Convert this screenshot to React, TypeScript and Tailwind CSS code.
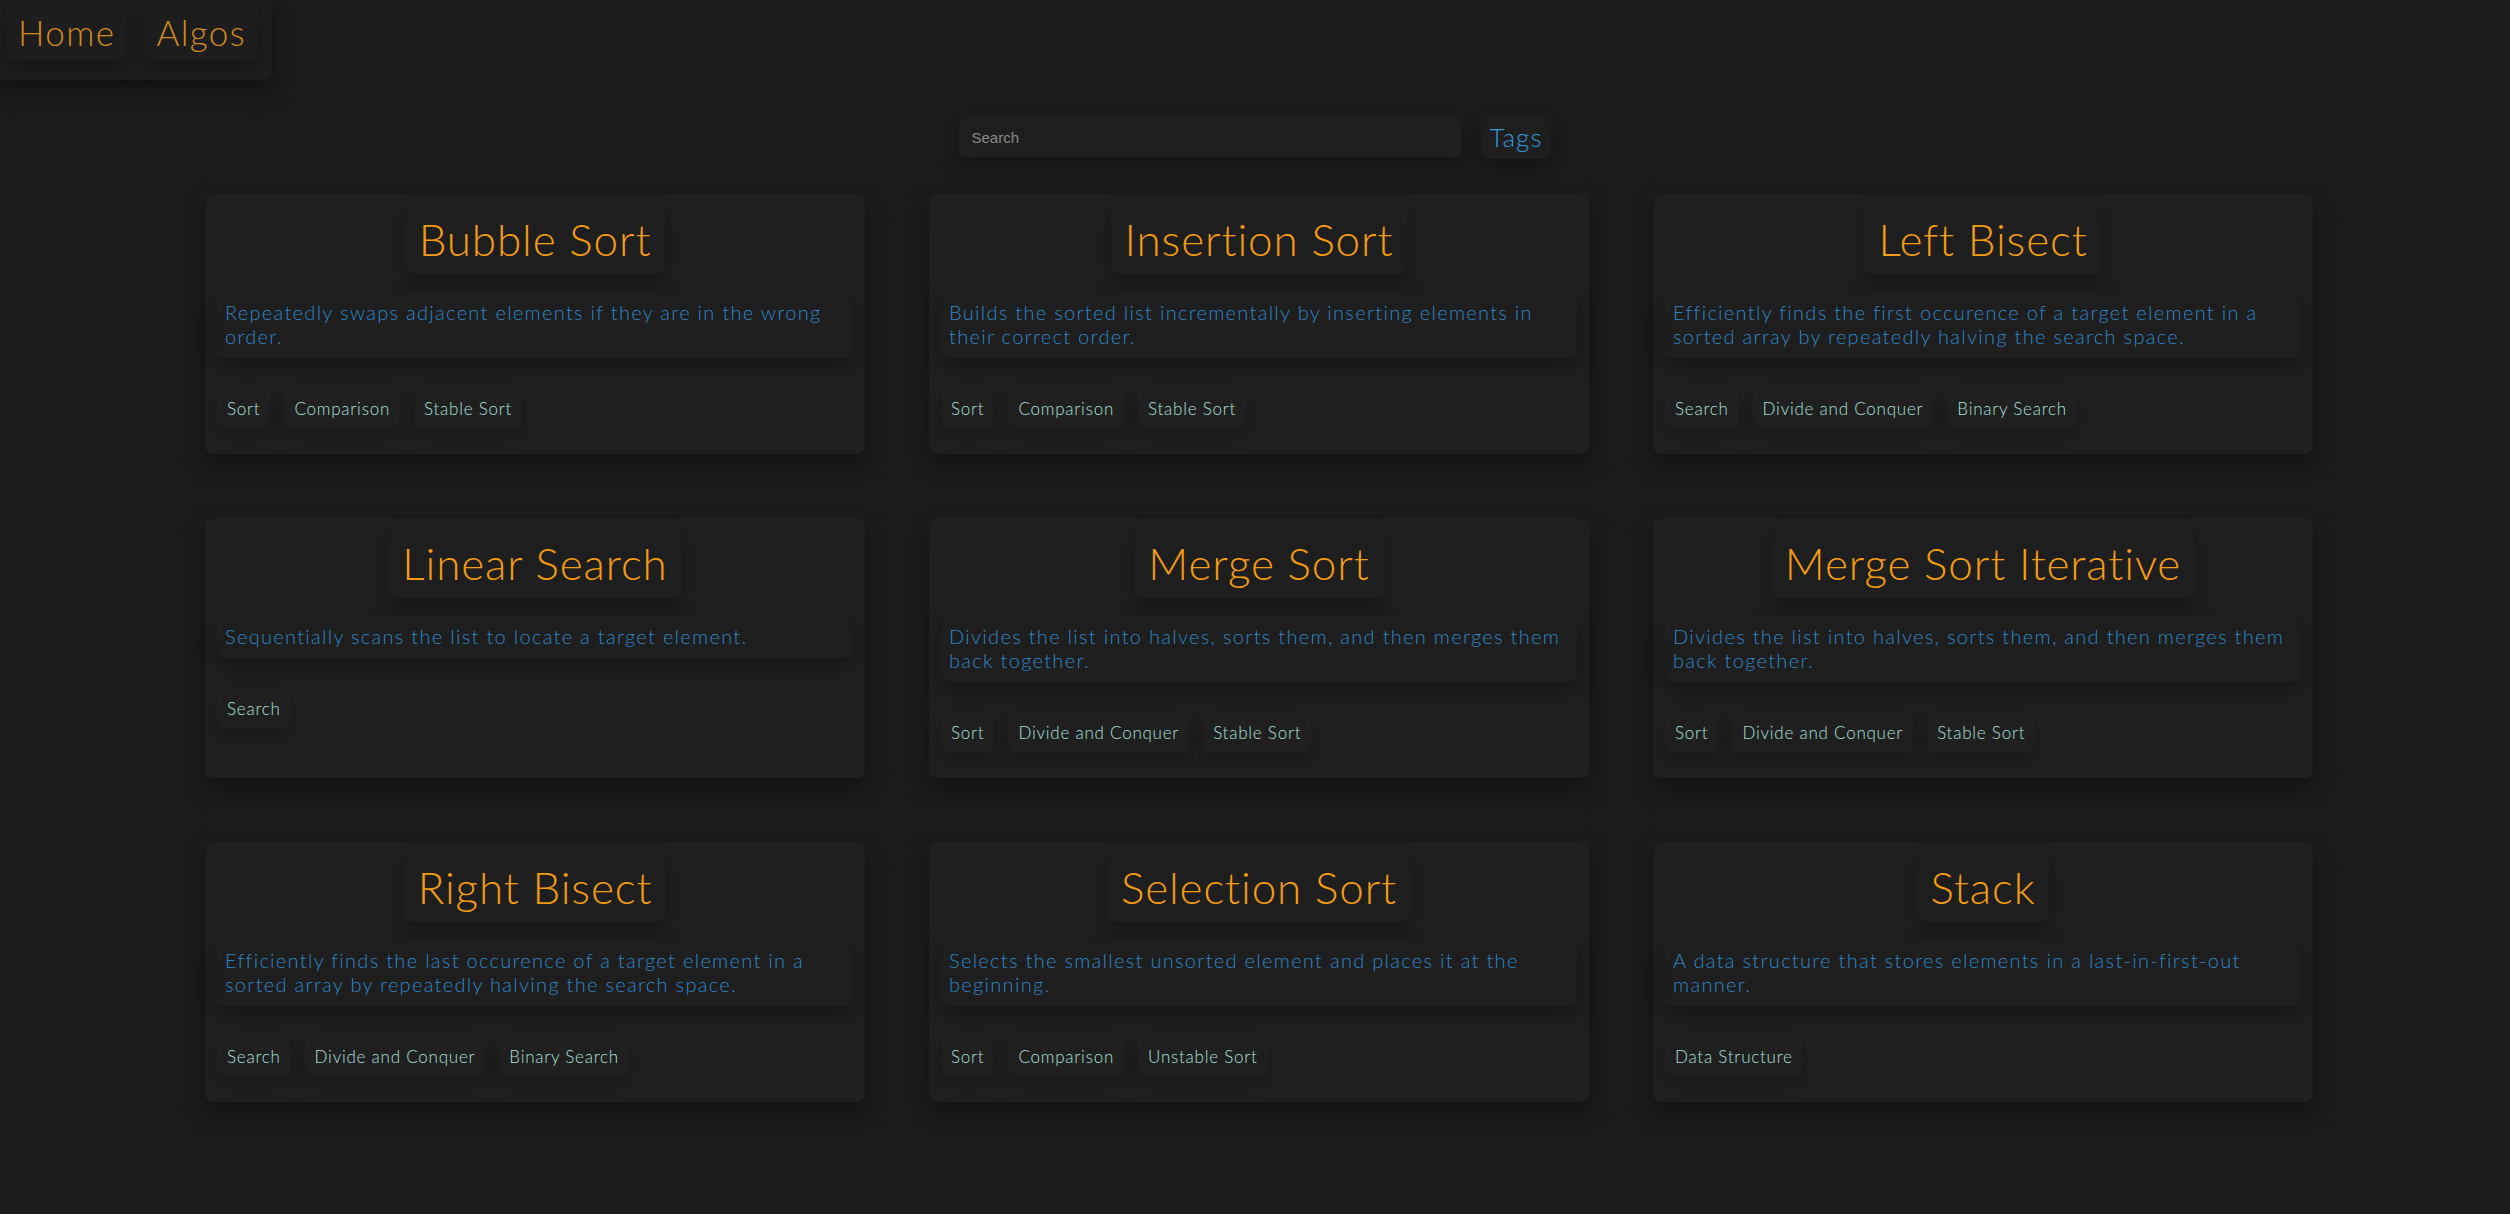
import React from "react";

type Algo = { name: string; desc: string; tags: string[] };

const algos: Algo[] = [
  {
    name: "Bubble Sort",
    desc: "Repeatedly swaps adjacent elements if they are in the wrong order.",
    tags: ["Sort", "Comparison", "Stable Sort"],
  },
  {
    name: "Insertion Sort",
    desc: "Builds the sorted list incrementally by inserting elements in their correct order.",
    tags: ["Sort", "Comparison", "Stable Sort"],
  },
  {
    name: "Left Bisect",
    desc: "Efficiently finds the first occurence of a target element in a sorted array by repeatedly halving the search space.",
    tags: ["Search", "Divide and Conquer", "Binary Search"],
  },
  {
    name: "Linear Search",
    desc: "Sequentially scans the list to locate a target element.",
    tags: ["Search"],
  },
  {
    name: "Merge Sort",
    desc: "Divides the list into halves, sorts them, and then merges them back together.",
    tags: ["Sort", "Divide and Conquer", "Stable Sort"],
  },
  {
    name: "Merge Sort Iterative",
    desc: "Divides the list into halves, sorts them, and then merges them back together.",
    tags: ["Sort", "Divide and Conquer", "Stable Sort"],
  },
  {
    name: "Right Bisect",
    desc: "Efficiently finds the last occurence of a target element in a sorted array by repeatedly halving the search space.",
    tags: ["Search", "Divide and Conquer", "Binary Search"],
  },
  {
    name: "Selection Sort",
    desc: "Selects the smallest unsorted element and places it at the beginning.",
    tags: ["Sort", "Comparison", "Unstable Sort"],
  },
  {
    name: "Stack",
    desc: "A data structure that stores elements in a last-in-first-out manner.",
    tags: ["Data Structure"],
  },
];

const font = "font-['Lato_Light','Lato','Noto_Sans',sans-serif] font-light";
const shadow = "shadow-[0_10px_22px_rgba(0,0,0,0.38)]";
const softShadow = "shadow-[0_8px_18px_rgba(0,0,0,0.3)]";
const tagShadow = "shadow-[0_8px_16px_rgba(0,0,0,0.22)]";

const AlgoCard: React.FC<{ algo: Algo }> = ({ algo }) => {
  return (
    <div
      className={`h-[260px] flex flex-col px-3 pt-[10px] rounded-lg bg-[#1f1f1f] ${shadow}`}
    >
      <div className="flex justify-center">
        <div
          className={`h-[70px] flex items-center px-[14px] rounded-lg bg-[#1e1e1e] text-[#f39c12] text-[44px] tracking-[0.02em] ${softShadow}`}
        >
          {algo.name}
        </div>
      </div>
      <div
        className={`mt-[18px] px-2 pt-2 pb-[10px] rounded-lg bg-[#1e1e1e] text-[#2e86c7] text-[20px] leading-[24px] tracking-[0.065em] ${softShadow}`}
      >
        {algo.desc}
      </div>
      <div className="mt-[31px] flex gap-[14px]">
        {algo.tags.map((t) => (
          <div
            key={t}
            className={`px-[10px] py-2 rounded-lg bg-[#1f1f1f] text-[#a9e0dc] text-[17px] leading-[23px] tracking-[0.045em] ${tagShadow}`}
          >
            {t}
          </div>
        ))}
      </div>
    </div>
  );
};

export default function App() {
  return (
    <div className={`h-[1214px] overflow-hidden bg-[#1c1c1c] ${font}`}>
      <nav
        className={`w-[272px] h-[80px] flex gap-[17px] pl-[6px] pt-[4px] rounded-br-lg bg-[#1e1e1e] ${shadow}`}
      >
        {["Home", "Algos"].map((l) => (
          <a
            key={l}
            className={`h-[56px] flex items-center px-[12px] rounded-lg bg-[#1d1d1d] text-[#cf8a1d] text-[35px] tracking-[0.04em] ${softShadow}`}
          >
            {l}
          </a>
        ))}
      </nav>

      <div className="mt-[35px] flex justify-center items-center gap-[20px]">
        <input
          placeholder="Search"
          className={`w-[502px] h-[42px] px-3 rounded-lg bg-[#1e1e1e] outline-none text-[15px] text-white placeholder:text-[#8a8a8a] font-['Liberation_Sans',Arial,sans-serif] font-normal ${softShadow}`}
        />
        <button
          className={`h-[44px] px-[8px] rounded-lg bg-[#1e1e1e] text-[#3498db] text-[26px] tracking-[0.04em] ${softShadow}`}
        >
          Tags
        </button>
      </div>

      <div className="mt-[35px] ml-[205px] w-[2108px] grid grid-cols-3 gap-[64px]">
        {algos.map((a) => (
          <AlgoCard key={a.name} algo={a} />
        ))}
      </div>
    </div>
  );
}
